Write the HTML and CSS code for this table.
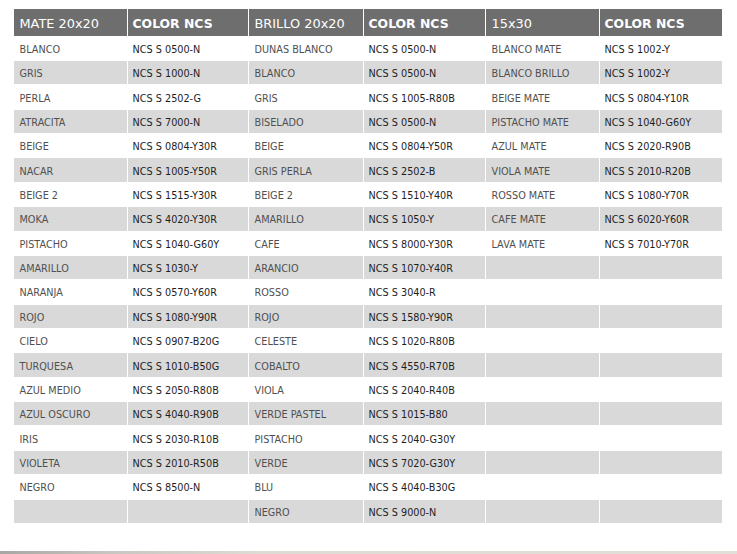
FILE: index.html
```html
<!DOCTYPE html>
<html lang="es">
<head>
<meta charset="utf-8">
<title>Colores NCS</title>
<link rel="stylesheet" href="styles.css">
</head>
<body>
<div class="page">
  <div class="wrap">
    <table class="ncs">
      <colgroup>
        <col class="c1"><col class="c2"><col class="c3"><col class="c4"><col class="c5"><col class="c6">
      </colgroup>
      <thead>
        <tr>
          <th>MATE 20x20</th><th class="b">COLOR NCS</th>
          <th>BRILLO 20x20</th><th class="b">COLOR NCS</th>
          <th>15x30</th><th class="b">COLOR NCS</th>
        </tr>
      </thead>
      <tbody>
        <tr><td>BLANCO</td><td class="code">NCS S 0500-N</td><td>DUNAS BLANCO</td><td class="code">NCS S 0500-N</td><td>BLANCO MATE</td><td class="code">NCS S 1002-Y</td></tr>
        <tr><td>GRIS</td><td class="code">NCS S 1000-N</td><td>BLANCO</td><td class="code">NCS S 0500-N</td><td>BLANCO BRILLO</td><td class="code">NCS S 1002-Y</td></tr>
        <tr><td>PERLA</td><td class="code">NCS S 2502-G</td><td>GRIS</td><td class="code">NCS S 1005-R80B</td><td>BEIGE MATE</td><td class="code">NCS S 0804-Y10R</td></tr>
        <tr><td>ATRACITA</td><td class="code">NCS S 7000-N</td><td>BISELADO</td><td class="code">NCS S 0500-N</td><td>PISTACHO MATE</td><td class="code">NCS S 1040-G60Y</td></tr>
        <tr><td>BEIGE</td><td class="code">NCS S 0804-Y30R</td><td>BEIGE</td><td class="code">NCS S 0804-Y50R</td><td>AZUL MATE</td><td class="code">NCS S 2020-R90B</td></tr>
        <tr><td>NACAR</td><td class="code">NCS S 1005-Y50R</td><td>GRIS PERLA</td><td class="code">NCS S 2502-B</td><td>VIOLA MATE</td><td class="code">NCS S 2010-R20B</td></tr>
        <tr><td>BEIGE 2</td><td class="code">NCS S 1515-Y30R</td><td>BEIGE 2</td><td class="code">NCS S 1510-Y40R</td><td>ROSSO MATE</td><td class="code">NCS S 1080-Y70R</td></tr>
        <tr><td>MOKA</td><td class="code">NCS S 4020-Y30R</td><td>AMARILLO</td><td class="code">NCS S 1050-Y</td><td>CAFE MATE</td><td class="code">NCS S 6020-Y60R</td></tr>
        <tr><td>PISTACHO</td><td class="code">NCS S 1040-G60Y</td><td>CAFE</td><td class="code">NCS S 8000-Y30R</td><td>LAVA MATE</td><td class="code">NCS S 7010-Y70R</td></tr>
        <tr><td>AMARILLO</td><td class="code">NCS S 1030-Y</td><td>ARANCIO</td><td class="code">NCS S 1070-Y40R</td><td></td><td></td></tr>
        <tr><td>NARANJA</td><td class="code">NCS S 0570-Y60R</td><td>ROSSO</td><td class="code">NCS S 3040-R</td><td></td><td></td></tr>
        <tr><td>ROJO</td><td class="code">NCS S 1080-Y90R</td><td>ROJO</td><td class="code">NCS S 1580-Y90R</td><td></td><td></td></tr>
        <tr><td>CIELO</td><td class="code">NCS S 0907-B20G</td><td>CELESTE</td><td class="code">NCS S 1020-R80B</td><td></td><td></td></tr>
        <tr><td>TURQUESA</td><td class="code">NCS S 1010-B50G</td><td>COBALTO</td><td class="code">NCS S 4550-R70B</td><td></td><td></td></tr>
        <tr><td>AZUL MEDIO</td><td class="code">NCS S 2050-R80B</td><td>VIOLA</td><td class="code">NCS S 2040-R40B</td><td></td><td></td></tr>
        <tr><td>AZUL OSCURO</td><td class="code">NCS S 4040-R90B</td><td>VERDE PASTEL</td><td class="code">NCS S 1015-B80</td><td></td><td></td></tr>
        <tr><td>IRIS</td><td class="code">NCS S 2030-R10B</td><td>PISTACHO</td><td class="code">NCS S 2040-G30Y</td><td></td><td></td></tr>
        <tr><td>VIOLETA</td><td class="code">NCS S 2010-R50B</td><td>VERDE</td><td class="code">NCS S 7020-G30Y</td><td></td><td></td></tr>
        <tr><td>NEGRO</td><td class="code">NCS S 8500-N</td><td>BLU</td><td class="code">NCS S 4040-B30G</td><td></td><td></td></tr>
        <tr><td></td><td></td><td>NEGRO</td><td class="code">NCS S 9000-N</td><td></td><td></td></tr>
      </tbody>
    </table>
  </div>
  <div class="footer-line"></div>
</div>
</body>
</html>
```

FILE: styles.css
```css
html, body {
  margin: 0;
  padding: 0;
  background: #ffffff;
}

.page {
  width: 737px;
  height: 554px;
  display: flex;
  flex-direction: column;
  overflow: hidden;
}

.wrap {
  padding: 8px 0 0 12.5px;
}

.ncs {
  border-collapse: separate;
  border-spacing: 1px;
  table-layout: fixed;
  width: 710px;
  font-family: "DejaVu Sans", Verdana, sans-serif;
}

.c1 { width: 113px; }
.c2 { width: 120px; }
.c3 { width: 114px; }
.c4 { width: 121px; }
.c5 { width: 113px; }
.c6 { width: 122px; }

.ncs th {
  background: #6e6e6e;
  color: #ffffff;
  font-weight: normal;
  font-size: 12.9px;
  text-align: left;
  padding: 3px 0 0 6px;
  height: 26.7px;
  box-sizing: border-box;
  white-space: nowrap;
  overflow: hidden;
}

.ncs th.b {
  font-weight: bold;
  font-size: 12.4px;
  padding-left: 5px;
}

.ncs td {
  font-size: 9.7px;
  color: #505050;
  padding: 2px 0 0 6px;
  height: 23.36px;
  box-sizing: border-box;
  white-space: nowrap;
  overflow: hidden;
}

.ncs td.code {
  color: #1e1e1e;
  padding-left: 5px;
}

.ncs tbody tr:nth-child(even) td {
  background: #d9d9d9;
}

.footer-line {
  margin-top: auto;
  height: 3px;
  background: linear-gradient(to right, #a9a7a4 0%, #c9c5c0 15%, #dedad4 35%, #e2ded8 100%);
}
```
